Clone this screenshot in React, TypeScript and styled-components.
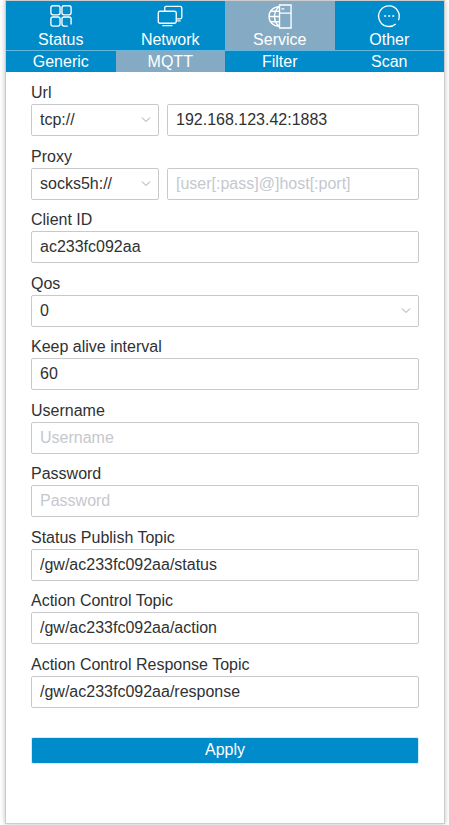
import React from 'react';
import styled, { createGlobalStyle } from 'styled-components';

const GlobalStyle = createGlobalStyle`
  *, *::before, *::after { box-sizing: border-box; }
  html, body { margin: 0; background: #fff; }
  body, input, select, button {
    font-family: "Liberation Sans", Arial, sans-serif;
    font-size: 16px;
    line-height: 20px;
    color: #303133;
  }
`;

const Panel = styled.div`
  display: flex;
  flex-direction: column;
  min-height: calc(100vh - 1px);
  margin: 0 4px 1px 5px;
  border: 1px solid #ccc;
  box-shadow: 0 0 5px rgba(0, 0, 0, 0.25);
  background: #fff;
`;

const Nav = styled.nav`
  display: grid;
  grid-template-columns: repeat(4, 1fr);
`;

const MainNav = styled(Nav)`
  border-bottom: 1px solid #66b6de;
`;

const tabBackground = ({ $active }: { $active?: boolean }) => ($active ? '#84abc3' : '#008bca');

const MainTab = styled.a<{ $active?: boolean }>`
  display: flex;
  flex-direction: column;
  align-items: center;
  padding-top: 3px;
  height: 49px;
  color: #fff;
  text-decoration: none;
  background: ${tabBackground};

  svg { display: block; margin-bottom: 1px; }
`;

const SubTab = styled.a<{ $active?: boolean }>`
  height: 21px;
  line-height: 22px;
  text-align: center;
  color: #fff;
  text-decoration: none;
  background: ${tabBackground};
`;

const Form = styled.form`
  flex: 1;
  display: flex;
  flex-direction: column;
  padding: 11px 25px 59px;
`;

const FieldList = styled.div`
  flex: 1;
  display: flex;
  flex-direction: column;
  justify-content: space-between;
  gap: 8px;
  margin-bottom: 29px;
`;

const Field = styled.div`
  display: flex;
  flex-direction: column;
`;

const Label = styled.label`
  height: 21px;
`;

const Split = styled.div`
  display: grid;
  grid-template-columns: 128px 1fr;
  gap: 8px;
`;

const Input = styled.input`
  width: 100%;
  min-width: 0;
  height: 32px;
  padding: 0 8px;
  border: 1px solid #c8c9cc;
  border-radius: 2px;
  background: #fff;
  outline: none;

  &::placeholder { color: #c5c8ce; opacity: 1; }
`;

const SelectBox = styled.div`
  position: relative;

  svg {
    position: absolute;
    right: 8px;
    top: 12px;
    pointer-events: none;
  }
`;

const Select = styled.select`
  display: block;
  appearance: none;
  width: 100%;
  height: 32px;
  padding: 0 24px 0 8px;
  border: 1px solid #c8c9cc;
  border-radius: 2px;
  background: #fff;
  outline: none;
`;

const ApplyButton = styled.button`
  height: 27px;
  padding: 0 0 2px;
  border: 1px solid #d5ebf6;
  border-radius: 2px;
  color: #fff;
  background: #008bca;
`;

const Icon = ({ children }: { children: React.ReactNode }) => (
  <svg width="26" height="26" viewBox="0 0 26 26" fill="none" stroke="#fff" strokeWidth="1.4" aria-hidden="true">
    {children}
  </svg>
);

const StatusIcon = () => (
  <Icon>
    <rect x="2.500" y="1.800" width="9.500" height="9.500" rx="2.200" />
    <rect x="14" y="1.800" width="9.500" height="9.500" rx="2.200" />
    <rect x="2.500" y="13.500" width="9.500" height="9.500" rx="2.200" />
    <path d="M20 23h-3.800a2.200 2.200 0 0 1-2.200-2.200v-5.100a2.200 2.200 0 0 1 2.200-2.200h5.100a2.200 2.200 0 0 1 2.200 2.200v5.500" />
  </Icon>
);

const NetworkIcon = () => (
  <Icon>
    <rect x="0.800" y="7.500" width="18.700" height="12.500" rx="1.800" />
    <path d="M5 22.500h10.500M7.500 7.200v-3.200q0-1.500 1.500-1.500h14.500q1.800 0 1.800 1.800v9.400q0 1.800-1.800 1.800h-3.500M20.500 17.500h3.500" />
  </Icon>
);

const ServiceIcon = () => (
  <Icon>
    <path d="M12.500 2.700C6 2.700 1.600 7.200 1.600 13S6 23.300 12.500 23.300M12.500 2.700C9 5 7.300 8.500 7.300 13s1.700 8 5.200 10.300M3.500 7.500h9M1.600 13h11M3.500 18.500h9" />
    <path d="M12.500 1h12v24h-12zM12.500 9.500h12M14.500 5h3" />
  </Icon>
);

const OtherIcon = () => (
  <Icon>
    <path d="M20 20.700A10.700 10.700 0 1 1 22.800 16.800" />
    <path d="M8 12.500h2M12.200 12.500h2M16.400 12.500h2" strokeWidth="1.600" />
  </Icon>
);

const Chevron = () => (
  <svg width="10" height="8" viewBox="0 0 10 8" fill="none" stroke="#a0a3aa" aria-hidden="true">
    <path d="M1 1.500l4 4 4-4" />
  </svg>
);

const mainTabs = [
  { name: 'Status', Glyph: StatusIcon },
  { name: 'Network', Glyph: NetworkIcon },
  { name: 'Service', Glyph: ServiceIcon },
  { name: 'Other', Glyph: OtherIcon },
];

const subTabs = ['Generic', 'MQTT', 'Filter', 'Scan'];

interface DropDownProps {
  id: string;
  options: string[];
  value: string;
}

const DropDown = ({ id, options, value }: DropDownProps) => (
  <SelectBox>
    <Select id={id} defaultValue={value}>
      {options.map((o) => <option key={o}>{o}</option>)}
    </Select>
    <Chevron />
  </SelectBox>
);

interface TextFieldProps {
  id: string;
  label: string;
  value?: string;
  placeholder?: string;
  type?: string;
}

const TextField = ({ id, label, value, placeholder, type = 'text' }: TextFieldProps) => (
  <Field>
    <Label htmlFor={id}>{label}</Label>
    <Input id={id} type={type} defaultValue={value} placeholder={placeholder} />
  </Field>
);

export default function App() {
  return (
    <>
      <GlobalStyle />
      <Panel>
        <MainNav aria-label="Sections">
          {mainTabs.map(({ name, Glyph }) => (
            <MainTab key={name} href={`#${name.toLowerCase()}`} $active={name === 'Service'}>
              <Glyph />
              {name}
            </MainTab>
          ))}
        </MainNav>
        <Nav aria-label="Service pages">
          {subTabs.map((name) => (
            <SubTab key={name} href={`#${name.toLowerCase()}`} $active={name === 'MQTT'}>{name}</SubTab>
          ))}
        </Nav>
        <Form onSubmit={(e) => e.preventDefault()}>
          <FieldList>
            <Field>
              <Label htmlFor="url-scheme">Url</Label>
              <Split>
                <DropDown id="url-scheme" value="tcp://" options={['tcp://', 'ssl://', 'ws://', 'wss://']} />
                <Input aria-label="Url host" defaultValue="192.168.123.42:1883" />
              </Split>
            </Field>
            <Field>
              <Label htmlFor="proxy-scheme">Proxy</Label>
              <Split>
                <DropDown id="proxy-scheme" value="socks5h://" options={['socks5h://', 'socks5://', 'http://']} />
                <Input aria-label="Proxy host" placeholder="[user[:pass]@]host[:port]" />
              </Split>
            </Field>
            <TextField id="client-id" label="Client ID" value="ac233fc092aa" />
            <Field>
              <Label htmlFor="qos">Qos</Label>
              <DropDown id="qos" value="0" options={['0', '1', '2']} />
            </Field>
            <TextField id="keep-alive" label="Keep alive interval" value="60" />
            <TextField id="username" label="Username" placeholder="Username" />
            <TextField id="password" label="Password" placeholder="Password" type="password" />
            <TextField id="status-topic" label="Status Publish Topic" value="/gw/ac233fc092aa/status" />
            <TextField id="action-topic" label="Action Control Topic" value="/gw/ac233fc092aa/action" />
            <TextField id="response-topic" label="Action Control Response Topic" value="/gw/ac233fc092aa/response" />
          </FieldList>
          <ApplyButton type="submit">Apply</ApplyButton>
        </Form>
      </Panel>
    </>
  );
}
